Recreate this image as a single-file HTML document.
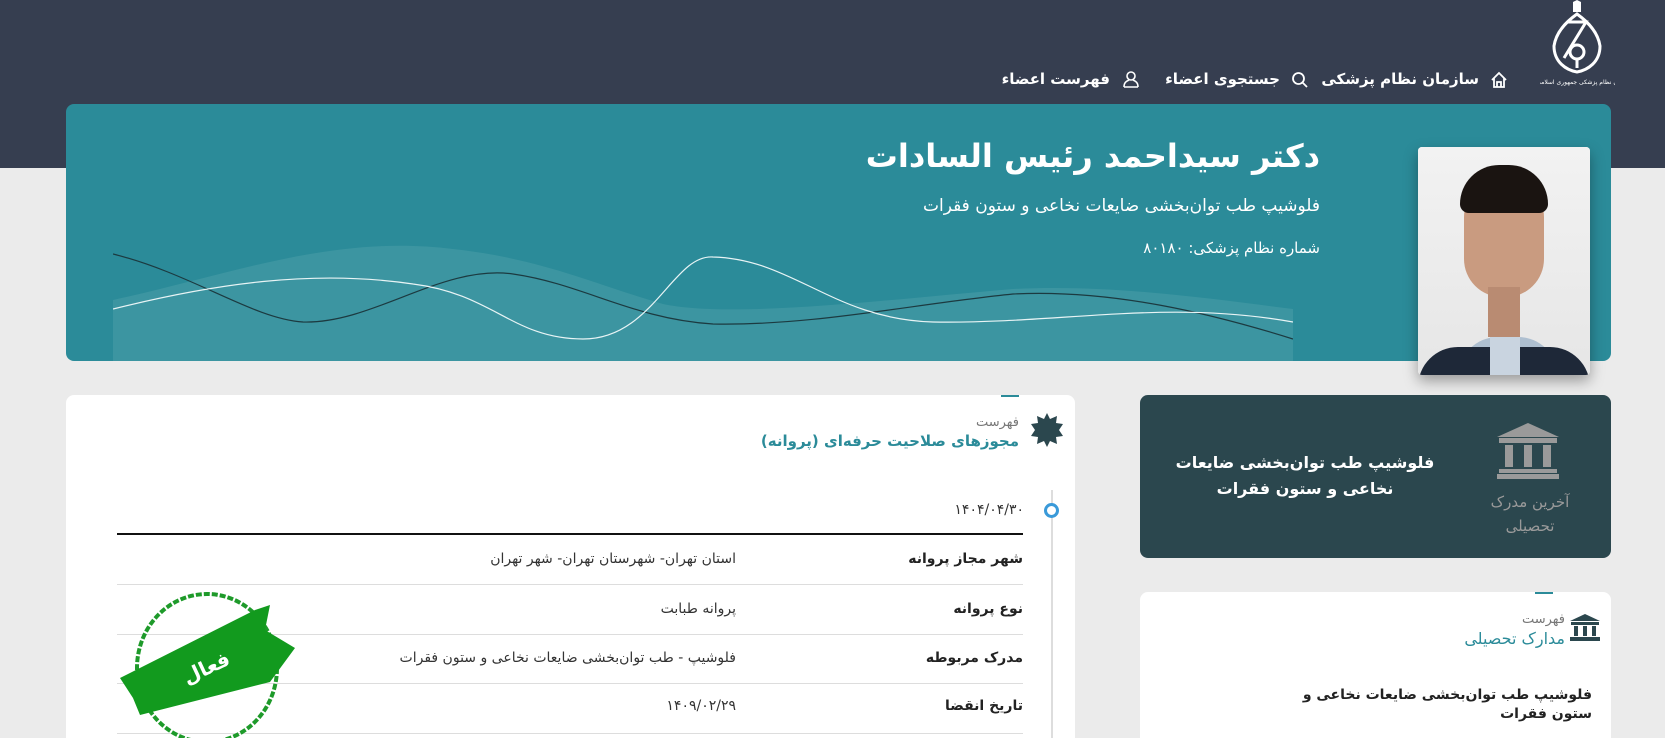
<!DOCTYPE html>
<html><head><meta charset="utf-8">
<style>
*{margin:0;padding:0;box-sizing:border-box}
html,body{width:1665px;height:738px;overflow:hidden}
body{background:#ebebeb;font-family:"DejaVu Sans","Liberation Sans",sans-serif;position:relative;direction:rtl}
.a{position:absolute}
.hdr{left:0;top:0;width:1665px;height:168px;background:#363e50}
.nav{color:#fff;font-weight:bold;font-size:15px;top:70px;white-space:nowrap}
.banner{left:66px;top:104px;width:1545px;height:257px;background:#2b8b99;border-radius:8px;overflow:hidden}
.card{background:#fff;border-radius:8px 8px 0 0}
.t{white-space:nowrap}
.lbl{font-size:14px;font-weight:bold;color:#222}
.val{font-size:14px;color:#333}
.sep{height:1px;background:#ddd;left:117px;width:906px}
</style></head><body>
<div class="a hdr"></div>
<svg class="a" style="left:1540px;top:0" width="75" height="90" viewBox="0 0 75 90">
<g fill="none" stroke="#fff" stroke-width="3">
<path d="M37 14 C26 22 16 32 14 46 C14 62 26 70 37 72 C48 70 60 62 60 46 C58 32 48 22 37 14Z"/>
<path d="M28 22 L46 22 L24 58"/>
<circle cx="37" cy="52" r="7"/>
<path d="M37 58 L37 68"/>
</g>
<path d="M33 2 L37 0 L41 2 L41 12 L33 12Z" fill="#fff"/>
<text x="37" y="84" fill="#fff" font-size="6" text-anchor="middle" font-family="DejaVu Sans">سازمان نظام پزشکی جمهوری اسلامی ایران</text>
</svg>
<svg class="a" style="left:1490px;top:71px" width="18" height="18" viewBox="0 0 18 18" fill="none" stroke="#fff" stroke-width="1.8"><path d="M2 9 L9 2 L16 9 M4 7 V16 H14 V7 M7 16 V11 H11 V16"/></svg>
<div class="a nav" style="right:186px">سازمان نظام پزشکی</div>
<svg class="a" style="left:1291px;top:71px" width="18" height="18" viewBox="0 0 18 18" fill="none" stroke="#fff" stroke-width="1.8"><circle cx="7.5" cy="7.5" r="5.5"/><path d="M11.5 11.5 L16 16"/></svg>
<div class="a nav" style="right:385px">جستجوی اعضاء</div>
<svg class="a" style="left:1122px;top:70px" width="18" height="18" viewBox="0 0 18 18" fill="none" stroke="#fff" stroke-width="1.6"><circle cx="9" cy="6" r="4"/><path d="M2 17 C2 12 5 11 7 10 M16 17 C16 12 13 11 11 10 M2 17 H16"/></svg>
<div class="a nav" style="right:555px">فهرست اعضاء</div>

<div class="a banner">
<svg class="a" style="left:47px;top:140px" width="1180" height="117" viewBox="0 0 1180 117">
<path d="M0 56 C120 30 220 -10 340 5 C430 15 480 40 550 60 C620 75 780 55 900 45 C1000 40 1100 55 1180 65 L1180 117 L0 117Z" fill="#4a9fa8" opacity="0.55"/>
<path d="M0 10 C80 30 140 75 190 78 C260 80 330 20 400 30 C470 40 520 75 600 80 C700 82 800 60 900 50 C1000 45 1100 70 1180 95" fill="none" stroke="#1c3a40" stroke-width="1.2"/>
<path d="M0 65 C100 40 200 25 300 40 C380 50 400 95 470 95 C540 95 560 10 600 13 C680 15 720 75 820 78 C950 80 1050 55 1180 78" fill="none" stroke="#e8f4f5" stroke-width="1.2"/>
</svg>
<div class="a t" style="right:291px;top:33px;color:#fff;font-size:32px;font-weight:bold">دکتر سیداحمد رئیس السادات</div>
<div class="a t" style="right:291px;top:92px;color:#fff;font-size:17px">فلوشیپ طب توان‌بخشی ضایعات نخاعی و ستون فقرات</div>
<div class="a t" style="right:291px;top:135px;color:#fff;font-size:15px">شماره نظام پزشکی: ۸۰۱۸۰</div>
</div>
<div class="a" style="left:1418px;top:147px;width:172px;height:228px;background:#fff;border-radius:4px;box-shadow:0 6px 14px rgba(0,0,0,.35);overflow:hidden">
<div class="a" style="left:0;top:0;width:172px;height:228px;background:linear-gradient(#f2f2f2,#e6e6e6)"></div>
<div class="a" style="left:40px;top:190px;width:100px;height:60px;background:#aebfd0;border-radius:40px 40px 0 0"></div>
<div class="a" style="left:0;top:200px;width:172px;height:40px;background:#1e2838;border-radius:60px 60px 0 0"></div>
<div class="a" style="left:72px;top:190px;width:30px;height:40px;background:#c9d4e0"></div>
<div class="a" style="left:46px;top:30px;width:80px;height:120px;background:#c99b80;border-radius:40px 40px 38px 38px"></div>
<div class="a" style="left:42px;top:18px;width:88px;height:48px;background:#1a1411;border-radius:44px 44px 10px 10px"></div>
<div class="a" style="left:70px;top:140px;width:32px;height:50px;background:#b98b72"></div>
</div>

<div class="a card" style="left:66px;top:395px;width:1009px;height:343px"></div>
<svg class="a" style="left:1030px;top:413px" width="34" height="34" viewBox="0 0 34 34"><polygon fill="#2b474e" points="17,0 20,6 27,3 26,10 33,11 29,17 33,23 26,24 27,31 20,28 17,34 14,28 7,31 8,24 1,23 5,17 1,11 8,10 7,3 14,6"/></svg>
<div class="a t" style="right:646px;top:415px;font-size:13px;color:#777">فهرست</div>
<div class="a t" style="right:646px;top:432px;font-size:15px;color:#2b8b99;font-weight:bold">مجوزهای صلاحیت حرفه‌ای (پروانه)</div>
<div class="a" style="left:1001px;top:395px;width:18px;height:2px;background:#2b8b99"></div>
<div class="a" style="left:1051px;top:490px;width:2px;height:248px;background:#ddd"></div>
<div class="a" style="left:1044px;top:503px;width:15px;height:15px;border:3px solid #3a9ad9;border-radius:50%;background:#fff"></div>
<div class="a t val" style="right:641px;top:502px">۱۴۰۴/۰۴/۳۰</div>
<div class="a" style="left:117px;top:533px;width:906px;height:2px;background:#111"></div>
<div class="a t lbl" style="right:642px;top:551px">شهر مجاز پروانه</div>
<div class="a t val" style="right:929px;top:551px">استان تهران- شهرستان تهران- شهر تهران</div>
<div class="a sep" style="top:584px"></div>
<div class="a t lbl" style="right:642px;top:601px">نوع پروانه</div>
<div class="a t val" style="right:929px;top:601px">پروانه طبابت</div>
<div class="a sep" style="top:634px"></div>
<div class="a t lbl" style="right:642px;top:650px">مدرک مربوطه</div>
<div class="a t val" style="right:929px;top:650px">فلوشیپ - طب توان‌بخشی ضایعات نخاعی و ستون فقرات</div>
<div class="a sep" style="top:683px"></div>
<div class="a t lbl" style="right:642px;top:698px">تاریخ انقضا</div>
<div class="a t val" style="right:929px;top:698px">۱۴۰۹/۰۲/۲۹</div>
<div class="a sep" style="top:733px"></div>
<svg class="a" style="left:115px;top:590px" width="185" height="148" viewBox="0 0 185 148">
<ellipse cx="92" cy="78" rx="70" ry="74" fill="none" stroke="#1e9a2a" stroke-width="4" stroke-dasharray="6 2"/>
<polygon points="5,88 140,20 155,15 150,40 180,58 155,92 25,125 18,108" fill="#129a1e"/>
<text x="90" y="85" fill="#fff" font-size="20" font-weight="bold" transform="rotate(-25 90 75)" text-anchor="middle" font-family="DejaVu Sans">فعال</text>
</svg>

<div class="a" style="left:1140px;top:395px;width:471px;height:163px;background:#2b474e;border-radius:8px"></div>
<svg class="a" style="left:1497px;top:423px" width="62" height="56" viewBox="0 0 62 56" fill="#9a9a9a"><polygon points="31,0 62,14 0,14"/><rect x="2" y="15" width="58" height="5"/><rect x="8" y="22" width="8" height="22"/><rect x="27" y="22" width="8" height="22"/><rect x="46" y="22" width="8" height="22"/><rect x="2" y="46" width="58" height="4"/><rect x="0" y="51" width="62" height="5"/></svg>
<div class="a" style="left:1470px;top:490px;width:120px;text-align:center;color:#9a9a9a;font-size:15px;line-height:24px">آخرین مدرک<br>تحصیلی</div>
<div class="a" style="left:1160px;top:450px;width:290px;text-align:center;color:#fff;font-size:16px;font-weight:bold;line-height:26px">فلوشیپ طب توان‌بخشی ضایعات<br>نخاعی و ستون فقرات</div>

<div class="a card" style="left:1140px;top:592px;width:471px;height:146px"></div>
<div class="a" style="left:1535px;top:592px;width:18px;height:2px;background:#2b8b99"></div>
<svg class="a" style="left:1570px;top:614px" width="30" height="28" viewBox="0 0 30 28" fill="#2b474e"><polygon points="15,0 30,7 0,7"/><rect x="1" y="8" width="28" height="3"/><rect x="4" y="12" width="4" height="10"/><rect x="13" y="12" width="4" height="10"/><rect x="22" y="12" width="4" height="10"/><rect x="0" y="23" width="30" height="4"/></svg>
<div class="a t" style="right:100px;top:612px;font-size:13px;color:#777">فهرست</div>
<div class="a t" style="right:100px;top:629px;font-size:16px;color:#2b8b99">مدارک تحصیلی</div>
<div class="a" style="right:73px;top:686px;width:300px;font-size:14px;font-weight:bold;color:#222;line-height:19px">فلوشیپ طب توان‌بخشی ضایعات نخاعی و<br>ستون فقرات</div>
</body></html>
